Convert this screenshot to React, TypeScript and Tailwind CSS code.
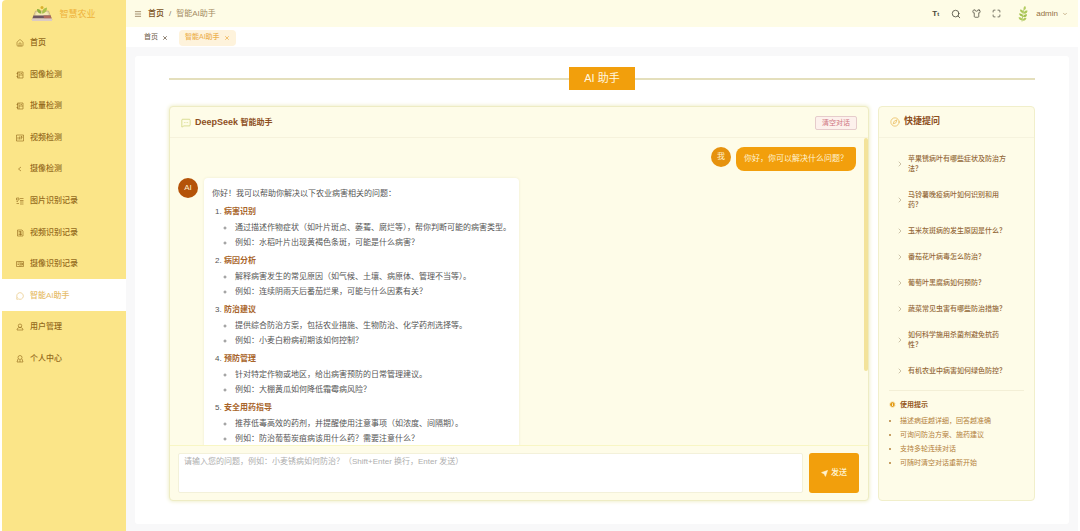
import React, { useState } from "react";
import {
  ChevronDown,
  ChevronRight,
  Compass,
  House,
  Info,
  Menu,
  MessageCircle,
  MessageSquareMore,
  Maximize,
  Search,
  Send,
  Shirt,
  X,
} from "lucide-react";

interface NavItem {
  label: string;
  icon: React.ReactNode;
}

interface AnswerSection {
  title: string;
  points: string[];
}

// Line icon on a 16x16 grid, used for the sidebar entries
const LineIcon = ({ d }: { d: string }) => (
  <svg viewBox="0 0 16 16" className="w-2 h-2" fill="none" stroke="currentColor" strokeWidth="1.25" aria-hidden="true">
    <path d={d} />
  </svg>
);

const PICTURE_PATH = "M3 2h11v12H3zM6 2v12M1 5h3M1 11h3M6 8h8M9 5h3";
const VIDEO_PATH = "M1 2h14v12H1zM4 11V6M7 11V5M10 11V5h2v3h-2";
const CAMERA_PATH = "M10 4L5 8l5 4";
const PICTURE_LOG_PATH = "M1 2h5v4H1zM1 9h3M1 13h5M8 3h7M8 7h7M8 10h7M8 14h7";
const VIDEO_LOG_PATH = "M3 2h9l2 2v10H3zM5 5h6M5 8h7M5 11h7M9 5v8";
const CAMERA_LOG_PATH = "M1 3h14v10H1zM8 3v10M3 6h3M3 9h3M10 6h3v4h-3z";
const USERS_PATH = "M8 2a3 3 0 0 1 0 7a3 3 0 0 1 0-7zM2 14c0-3 2-5 6-5s6 2 6 5z";
const PERSON_PATH = "M8 1a4 4 0 0 1 0 8a4 4 0 0 1 0-8zM4 8l-2 6h12l-2-6M6 12h4";

const NAV_ITEMS: NavItem[] = [
  { label: "首页", icon: <House className="w-2 h-2" strokeWidth={1.75} /> },
  { label: "图像检测", icon: <LineIcon d={PICTURE_PATH} /> },
  { label: "批量检测", icon: <LineIcon d={PICTURE_PATH} /> },
  { label: "视频检测", icon: <LineIcon d={VIDEO_PATH} /> },
  { label: "摄像检测", icon: <LineIcon d={CAMERA_PATH} /> },
  { label: "图片识别记录", icon: <LineIcon d={PICTURE_LOG_PATH} /> },
  { label: "视频识别记录", icon: <LineIcon d={VIDEO_LOG_PATH} /> },
  { label: "摄像识别记录", icon: <LineIcon d={CAMERA_LOG_PATH} /> },
  { label: "智能AI助手", icon: <MessageCircle className="w-2 h-2" strokeWidth={1.75} /> },
  { label: "用户管理", icon: <LineIcon d={USERS_PATH} /> },
  { label: "个人中心", icon: <LineIcon d={PERSON_PATH} /> },
];

const ANSWER: AnswerSection[] = [
  {
    title: "病害识别",
    points: [
      "通过描述作物症状（如叶片斑点、萎蔫、腐烂等），帮你判断可能的病害类型。",
      "例如：水稻叶片出现黄褐色条斑，可能是什么病害？",
    ],
  },
  {
    title: "病因分析",
    points: [
      "解释病害发生的常见原因（如气候、土壤、病原体、管理不当等）。",
      "例如：连续阴雨天后番茄烂果，可能与什么因素有关？",
    ],
  },
  {
    title: "防治建议",
    points: [
      "提供综合防治方案，包括农业措施、生物防治、化学药剂选择等。",
      "例如：小麦白粉病初期该如何控制？",
    ],
  },
  {
    title: "预防管理",
    points: [
      "针对特定作物或地区，给出病害预防的日常管理建议。",
      "例如：大棚黄瓜如何降低霜霉病风险？",
    ],
  },
  {
    title: "安全用药指导",
    points: [
      "推荐低毒高效的药剂，并提醒使用注意事项（如浓度、间隔期）。",
      "例如：防治葡萄炭疽病该用什么药？需要注意什么？",
    ],
  },
];

const QUESTIONS = [
  "苹果锈病叶有哪些症状及防治方法？",
  "马铃薯晚疫病叶如何识别和用药？",
  "玉米灰斑病的发生原因是什么？",
  "番茄花叶病毒怎么防治？",
  "葡萄叶黑腐病如何预防？",
  "蔬菜常见虫害有哪些防治措施？",
  "如何科学施用杀菌剂避免抗药性？",
  "有机农业中病害如何绿色防控？",
];

const TIPS = [
  "描述病症越详细，回答越准确",
  "可询问防治方案、施药建议",
  "支持多轮连续对话",
  "可随时清空对话重新开始",
];

const Logo = () => (
  <svg viewBox="0 0 44 34" className="w-[22px] h-[17px]" aria-hidden="true">
    <path d="M9 12h26l7 18H2z" fill="#e6d6a4" stroke="#b59a68" strokeWidth="1" />
    <path d="M12 14h20l3 7H9z" fill="#f6e9b4" />
    <path d="M5 21h34l2 6H3z" fill="#6d5560" />
    <path d="M25 21h14l2 6H26z" fill="#b06a5c" />
    <path d="M2 27h40v5H2z" fill="#dccbc4" />
    <path d="M21 17C14 17 12 13 12 8c6 0 9 4 9 9z" fill="#8fae3c" />
    <path d="M22 17c0-7 3-11 10-12 0 7-4 12-10 12z" fill="#a9c04a" />
    <circle cx="22" cy="5" r="3" fill="#d9b02c" />
  </svg>
);

const PlantAvatar = () => (
  <svg viewBox="0 0 20 32" className="w-[10px] h-4" aria-hidden="true">
    <path d="M8 31C9 22 10 12 13 3" stroke="#a3bd55" strokeWidth="1.5" fill="none" />
    <path d="M13 8c-3-3-2-6 1-8 3 3 2 6-1 8z" fill="#b4cd62" />
    <path d="M11 14C6 14 4 11 4 7c5 0 7 3 7 7zM11 15c1-5 4-6 8-6 0 5-3 7-8 6z" fill="#abc858" />
    <path d="M10 21c-5 0-7-2-8-6 5-1 8 2 8 6zM10 22c1-4 4-6 8-5 0 4-3 6-8 5z" fill="#a3c14e" />
    <path d="M9 28c-4 1-7-1-8-5 5-1 7 1 8 5zM9 29c1-4 4-6 8-5-1 4-4 6-8 5z" fill="#b0ca5c" />
  </svg>
);

const Sidebar: React.FC = () => (
  <aside className="w-[124px] shrink-0 bg-[#fbe588] rounded-tl">
    <div className="h-[27px] flex items-center justify-center gap-[6px] pr-px">
      <Logo />
      <span className="text-[9px] leading-3 text-[#eeb23c]">智慧农业</span>
    </div>
    <nav className="grid auto-rows-fr h-[347px]">
      {NAV_ITEMS.map(({ label, icon }) => {
        const active = label === "智能AI助手";
        return (
          <a
            key={label}
            href="#"
            className={`flex items-center gap-[6px] pl-[14px] pt-px text-[8px] font-medium ${
              active ? "bg-white text-[#e6bc68]" : "text-[#946a1c]"
            }`}
          >
            {icon}
            <span>{label}</span>
          </a>
        );
      })}
    </nav>
  </aside>
);

const Header: React.FC = () => (
  <header className="h-[27px] shrink-0 flex items-center justify-between pl-2 pr-[10px] bg-[#fefce6] text-[8px]">
    <div className="flex items-center">
      <button aria-label="折叠菜单" className="mr-[6px] text-[#7a5c35]">
        <Menu className="w-2 h-2" strokeWidth={2} />
      </button>
      <a href="#" className="font-medium text-[#7a5020]">首页</a>
      <span className="mx-[5px] text-[#8a7a60]">/</span>
      <span className="text-[#a38a62]">智能AI助手</span>
    </div>
    <div className="flex items-center text-[#4c4a3c]">
      <button aria-label="字体大小" className="mr-3 font-bold leading-none">
        T<span className="text-[6px]">t</span>
      </button>
      <button aria-label="搜索" className="mr-[11px]"><Search className="w-[10px] h-[10px]" /></button>
      <button aria-label="主题" className="mr-[11px]"><Shirt className="w-[9px] h-[9px]" /></button>
      <button aria-label="全屏" className="mr-[17px]"><Maximize className="w-[9px] h-[9px]" /></button>
      <button className="flex items-center text-[#94703f]">
        <PlantAvatar />
        <span className="ml-2 mr-1">admin</span>
        <ChevronDown className="w-[6px] h-[6px]" />
      </button>
    </div>
  </header>
);

const TabBar: React.FC = () => (
  <div className="h-5 shrink-0 flex items-center gap-[11px] pl-[18px] pt-px bg-white text-[7px]">
    <button className="flex items-center gap-1 text-[#6b5a45]">
      首页 <X className="w-[6px] h-[6px]" strokeWidth={3} />
    </button>
    <button className="h-4 flex items-center gap-1 px-[6px] rounded-sm bg-[#fef3dc] font-medium text-[#ecb04e]">
      智能AI助手 <X className="w-[6px] h-[6px]" strokeWidth={3} />
    </button>
  </div>
);

const ChatPanel: React.FC = () => {
  const [message, setMessage] = useState("");

  return (
    <section className="flex-1 min-w-0 flex flex-col bg-[#fefce8] border border-[#eeecc4] rounded-[4px] shadow-[0_0_4px_#e9e8b8]">
      <div className="h-[31px] shrink-0 flex items-center justify-between px-[11px] pt-px border-b border-[#f6f2dc]">
        <h2 className="flex items-center gap-1 text-[9px] font-bold text-[#8d4f1e]">
          <MessageSquareMore className="w-[10px] h-[10px] text-[#c5cc62]" strokeWidth={1.5} />
          <span>
            DeepSeek <span className="text-[8px]">智能助手</span>
          </span>
        </h2>
        <button className="h-[14px] px-[6px] rounded-[2px] border border-[#e6cccb] bg-[#fdf1ec] text-[7px] leading-3 text-[#cf7480]">
          清空对话
        </button>
      </div>

      {/* Messages */}
      <div className="relative flex-1 min-h-0 overflow-hidden pl-2 pr-3 pt-[9px]">
        <div className="flex justify-end gap-[5px]">
          <span className="w-5 h-5 shrink-0 flex items-center justify-center rounded-full bg-[#e6920e] text-[8px] text-[#fff0c8]">
            我
          </span>
          <p className="px-2 py-[5px] rounded-lg rounded-tr-[2px] bg-[#f29f0c] text-[8px] leading-[14px] text-[#fff4d6]">
            你好，你可以解决什么问题？
          </p>
        </div>
        <div className="mt-[7px] flex items-start gap-[6px]">
          <span className="w-5 h-5 shrink-0 flex items-center justify-center rounded-full bg-[#b45309] text-[8px] text-[#fff0d0]">
            AI
          </span>
          <div className="px-2 pt-2 pb-6 rounded-[4px] bg-white text-[8px] text-[#555] shadow-[0_0_3px_#efecd0]">
            <p className="leading-[15px]">你好！我可以帮助你解决以下农业病害相关的问题：</p>
            <ol className="pt-[2px]">
              {ANSWER.map((section, index) => (
                <li key={section.title} className="pl-[3px] pb-[2px]">
                  <p className="leading-[17px]">
                    {index + 1}. <strong className="text-[#a8642a]">{section.title}</strong>
                  </p>
                  <ul className="pl-5 list-[circle] marker:text-[#888]">
                    {section.points.map((point) => (
                      <li key={point} className="leading-[15px]">{point}</li>
                    ))}
                  </ul>
                </li>
              ))}
            </ol>
          </div>
        </div>
        <div className="absolute right-0 top-0 w-1 h-[76%] rounded-full bg-[#f3e39b]" />
      </div>

      {/* Input */}
      <form className="shrink-0 flex gap-[6px] pl-2 pr-[9px] py-[7px] border-t border-[#f8f6c4]" onSubmit={(e) => e.preventDefault()}>
        <textarea
          aria-label="问题"
          value={message}
          onChange={(e) => setMessage(e.target.value)}
          placeholder="请输入您的问题，例如：小麦锈病如何防治？（Shift+Enter 换行，Enter 发送）"
          className="flex-1 h-10 px-[5px] py-[2px] resize-none rounded-[2px] border border-[#f3f1da] bg-white text-[8px] leading-3 placeholder:text-[#aeaeae] focus:outline-none"
        />
        <button className="w-[50px] h-10 flex items-center justify-center gap-[3px] rounded-[3px] bg-[#f29f0c] text-[8px] font-medium text-[#fff3d0]">
          <Send className="w-[7px] h-[7px]" fill="currentColor" />
          发送
        </button>
      </form>
    </section>
  );
};

const QuickPanel: React.FC = () => (
  <aside className="w-[157px] shrink-0 bg-[#fefce8] border border-[#f1efcb] rounded-[4px]">
    <h2 className="h-[31px] flex items-center gap-1 pl-[11px] border-b border-[#f6f3de] text-[9px] font-bold text-[#8d4f1e]">
      <Compass className="w-[10px] h-[10px] text-[#e5ac3c]" strokeWidth={1.5} />
      快捷提问
    </h2>
    <ul className="pt-2 px-[10px]">
      {QUESTIONS.map((question) => (
        <li key={question}>
          <button className="w-full flex items-center gap-1 pl-[7px] py-2 text-left text-[7px] leading-[10px] font-medium text-[#94693a]">
            <ChevronRight className="w-2 h-2 shrink-0 text-[#a89a78]" strokeWidth={1.75} />
            <span className="w-[103px]">{question}</span>
          </button>
        </li>
      ))}
    </ul>
    <div className="mx-[10px] mt-[6px] pt-2 border-t border-[#f3efd6]">
      <h3 className="flex items-center gap-1 text-[7px] leading-[11px] font-bold text-[#96591c]">
        <Info className="w-[7px] h-[7px] text-[#fefce8]" fill="#e29a14" strokeWidth={3} />
        使用提示
      </h3>
      <ul className="mt-1 pl-[11px] list-disc text-[7px] leading-[14px] text-[#b3803a]">
        {TIPS.map((tip) => (
          <li key={tip}>{tip}</li>
        ))}
      </ul>
    </div>
  </aside>
);

export default function App() {
  return (
    <div
      lang="zh-CN"
      className="h-screen flex px-[2px] overflow-hidden bg-white font-['Liberation_Sans','Noto_Sans_CJK_SC',sans-serif]"
    >
      <Sidebar />
      <div className="flex-1 min-w-0 flex flex-col">
        <Header />
        <TabBar />
        <div className="flex-1 min-h-0 pt-[9px] pb-[7px] px-[9px] bg-[#f8f8f9]">
          <main className="h-full flex flex-col px-[34px] pt-[11px] pb-[23px] rounded-[3px] bg-white">
            <div className="flex items-center">
              <div className="h-[2px] flex-1 bg-[#e4dfbc]" />
              <h1 className="px-[15px] py-[3px] bg-[#f29f0c] text-[11px] leading-[17px] text-[#fff8e2]">AI 助手</h1>
              <div className="h-[2px] flex-1 bg-[#e4dfbc]" />
            </div>
            <div className="mt-4 flex-1 min-h-0 flex gap-[9px]">
              <ChatPanel />
              <QuickPanel />
            </div>
          </main>
        </div>
      </div>
    </div>
  );
}
